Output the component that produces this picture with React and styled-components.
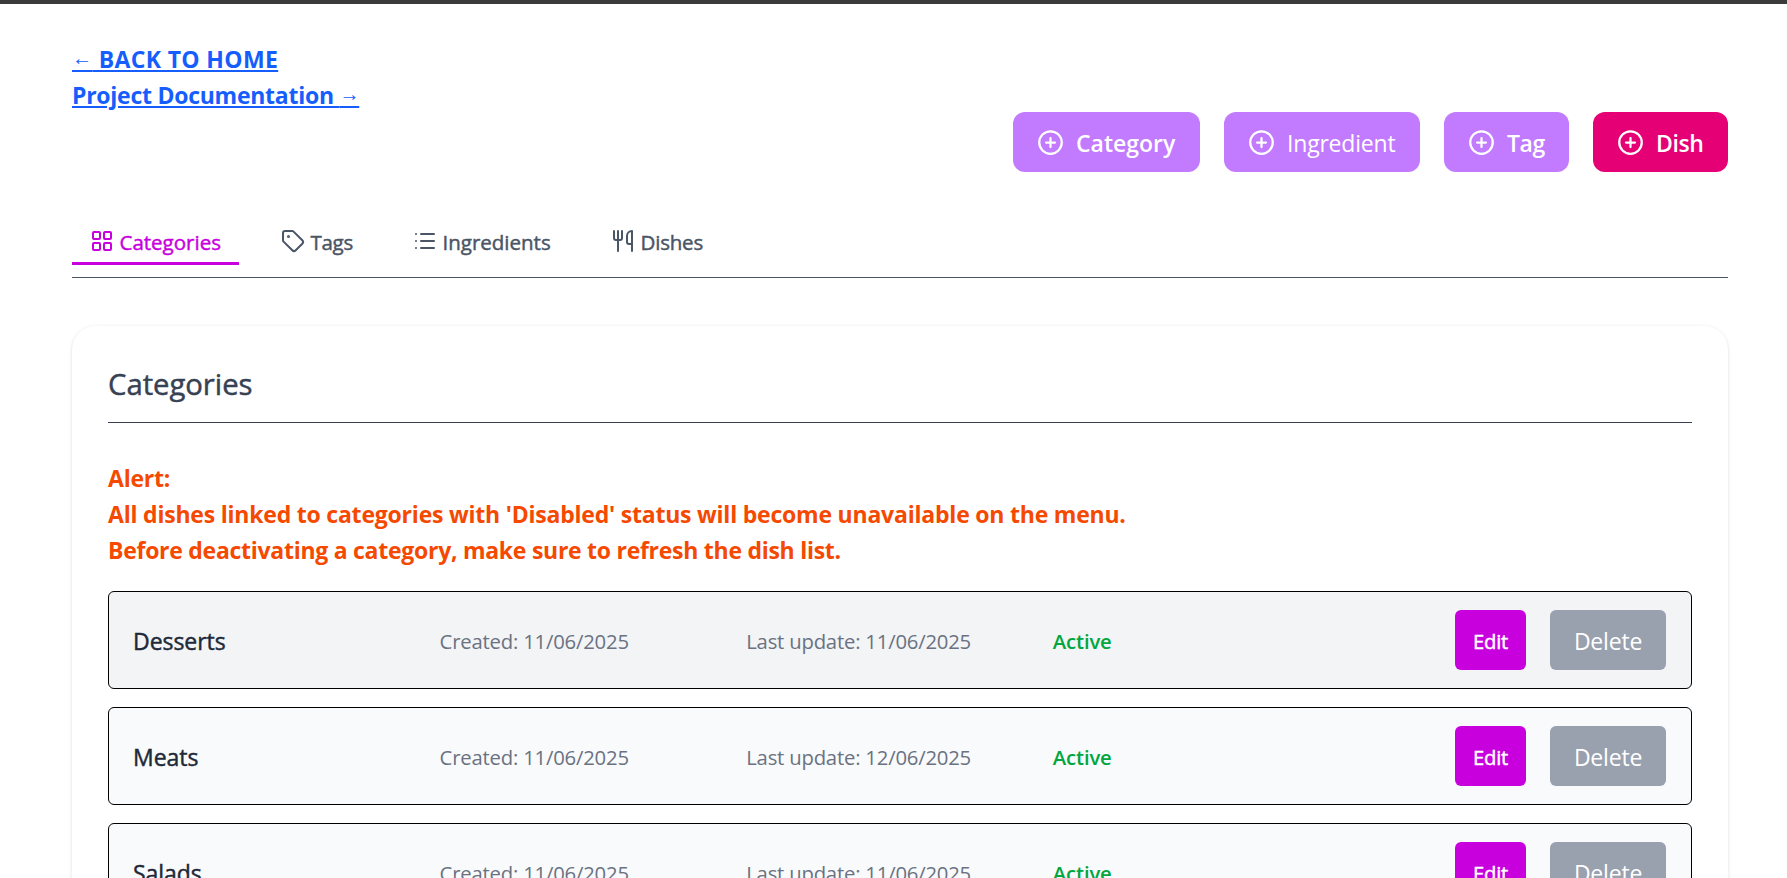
import React from "react";
import styled, { createGlobalStyle, css } from "styled-components";
import { CirclePlus, LayoutGrid, List, Tag, Utensils } from "lucide-react";

const GlobalStyle = createGlobalStyle`
  *, *::before, *::after { box-sizing: border-box; }
  html, body { margin: 0; height: 878px; overflow: hidden; }
  body {
    background: #fff;
    font-family: "Open Sans", "Noto Sans", sans-serif;
    font-size: 23px;
    line-height: 36px;
  }
  button { font-family: inherit; border: 0; margin: 0; cursor: pointer; }
`;

/* Open Sans has no medium cut here, so regular is thickened slightly. */
const medium = css`
  font-weight: 400;
  -webkit-text-stroke: 0.45px currentColor;
`;

const Page = styled.main`
  height: 878px;
  overflow: hidden;
  border-top: 4px solid #3b3b3b;
  padding: 36px 59px 0 72px;
`;

const Links = styled.nav`
  display: flex;
  flex-direction: column;
  align-items: flex-start;
  padding-top: 1px;
  height: 72px;
`;

const TextLink = styled.a`
  color: #155dfc;
  font-weight: 700;
  letter-spacing: ${(p) => p.$spacing}px;
  white-space: nowrap;
  text-decoration: underline;
  text-decoration-thickness: 2px;
  text-underline-offset: 2px;
`;

const Arrow = styled.span`
  font-family: "Liberation Sans", sans-serif;
  font-size: 20px;
  font-weight: 400;
  line-height: 1;
  vertical-align: 3px;
`;

const Actions = styled.div`
  display: flex;
  justify-content: flex-end;
  gap: 24px;
`;

const ActionButton = styled.button`
  display: flex;
  align-items: center;
  gap: 12px;
  width: ${(p) => p.$width}px;
  height: 60px;
  padding: 0 0 0 24px;
  border-radius: 12px;
  background: ${(p) => (p.$primary ? "#e60076" : "#c27aff")};
  color: #fff;
  font-size: 23px;
  font-weight: ${(p) => p.$weight};
  letter-spacing: ${(p) => p.$spacing}px;
  line-height: 36px;
  white-space: nowrap;

  svg { flex: none; }
  span { padding-top: 2px; }
`;

const Tabs = styled.nav`
  display: flex;
  gap: 24px;
  margin-top: 48px;
  height: 58px;
  border-bottom: 1px solid #4a5565;
`;

const Tab = styled.a`
  display: flex;
  align-items: flex-start;
  gap: 5.5px;
  width: ${(p) => p.$width}px;
  height: 45px;
  padding: 9px 0 0 18px;
  border-bottom: 3px solid ${(p) => (p.$active ? "#c800de" : "transparent")};
  color: ${(p) => (p.$active ? "#c800de" : "#4a5565")};
  font-size: 20.5px;
  line-height: 26px;
  letter-spacing: ${(p) => p.$spacing || 0}px;
  white-space: nowrap;

  svg { flex: none; }
  span { ${medium} }
`;

const Card = styled.section`
  margin-top: 48px;
  padding: 36px;
  border-radius: 24px;
  background: #fff;
  box-shadow: 0 1px 4px rgba(0, 0, 0, 0.1), 0 1px 3px -1px rgba(0, 0, 0, 0.1);
`;

const TitleBar = styled.header`
  height: 61px;
  margin-bottom: 37px;
  border-bottom: 1px solid #364153;
`;

const Title = styled.h2`
  margin: 0;
  padding-top: 1px;
  color: #364153;
  font-size: 29.3px;
  line-height: 42px;
  letter-spacing: -0.05px;
  ${medium}
`;

const Alert = styled.div`
  margin: 0 0 23px;
  color: #f54900;
  font-weight: 700;
`;

const AlertLine = styled.p`
  margin: 0;
  letter-spacing: ${(p) => p.$spacing}px;
`;

const Rows = styled.div`
  display: flex;
  flex-direction: column;
  gap: 18px;
`;

const Row = styled.div`
  display: grid;
  grid-template-columns: repeat(5, 1fr);
  align-items: center;
  height: 98px;
  padding: 0 25px 0 24px;
  border: 1px solid #000;
  border-radius: 6px;
  background: ${(p) => (p.$highlighted ? "#f3f4f6" : "#f9fafb")};
`;

const Name = styled.span`
  padding-top: 2px;
  color: #1e2939;
  letter-spacing: -0.05px;
  ${medium}
`;

const Meta = styled.span`
  padding-top: 1px;
  color: #6a7282;
  font-size: 20.3px;
  letter-spacing: -0.2px;
`;

const Status = styled(Meta)`
  color: #00a63e;
  font-weight: 600;
  letter-spacing: -0.14px;
`;

const RowActions = styled.div`
  display: flex;
  justify-content: flex-end;
  gap: 24px;
`;

const RowButton = styled.button`
  width: ${(p) => (p.$danger ? 116 : 71)}px;
  height: 60px;
  padding: 2px 0 0;
  border-radius: 6px;
  background: ${(p) => (p.$danger ? "#99a1af" : "#c800de")};
  color: #fff;
  font-size: ${(p) => (p.$danger ? 23 : 20.3)}px;
  letter-spacing: -0.2px;
  ${(p) => !p.$danger && medium}
`;

const actions = [
  { label: "Category", width: 187, weight: 600, spacing: 0 },
  { label: "Ingredient", width: 196, weight: 400, spacing: -0.2 },
  { label: "Tag", width: 125, weight: 600, spacing: -0.4 },
  { label: "Dish", width: 135, weight: 600, spacing: -0.4, primary: true },
];

const tabs = [
  { label: "Categories", icon: LayoutGrid, width: 167, spacing: 0, active: true },
  { label: "Tags", icon: Tag, width: 108, spacing: -0.3 },
  { label: "Ingredients", icon: List, width: 174, spacing: 0 },
  { label: "Dishes", icon: Utensils, width: 128, spacing: -0.2 },
];

const categories = [
  { name: "Desserts", created: "11/06/2025", updated: "11/06/2025" },
  { name: "Meats", created: "11/06/2025", updated: "12/06/2025" },
  { name: "Salads", created: "11/06/2025", updated: "11/06/2025" },
];

export default function App() {
  return (
    <>
      <GlobalStyle />
      <Page>
        <Links>
          <TextLink $spacing={0.35}>
            <Arrow>←</Arrow> BACK TO HOME
          </TextLink>
          <TextLink $spacing={-0.26}>
            Project Documentation <Arrow>→</Arrow>
          </TextLink>
        </Links>
        <Actions>
          {actions.map((a) => (
            <ActionButton key={a.label} $width={a.width} $weight={a.weight} $spacing={a.spacing} $primary={a.primary}>
              <CirclePlus size={27} strokeWidth={2} />
              <span>{a.label}</span>
            </ActionButton>
          ))}
        </Actions>
        <Tabs>
          {tabs.map(({ label, icon: Icon, width, spacing, active }) => (
            <Tab key={label} $width={width} $spacing={spacing} $active={active}>
              <Icon size={24} strokeWidth={2} />
              <span>{label}</span>
            </Tab>
          ))}
        </Tabs>
        <Card>
          <TitleBar>
            <Title>Categories</Title>
          </TitleBar>
          <Alert>
            <AlertLine $spacing={-0.22}>Alert:</AlertLine>
            <AlertLine $spacing={-0.21}>
              All dishes linked to categories with 'Disabled' status will become unavailable on the menu.
            </AlertLine>
            <AlertLine $spacing={-0.27}>Before deactivating a category, make sure to refresh the dish list.</AlertLine>
          </Alert>
          <Rows>
            {categories.map((c, i) => (
              <Row key={c.name} $highlighted={i === 0}>
                <Name>{c.name}</Name>
                <Meta>Created: {c.created}</Meta>
                <Meta>Last update: {c.updated}</Meta>
                <Status>Active</Status>
                <RowActions>
                  <RowButton>Edit</RowButton>
                  <RowButton $danger>Delete</RowButton>
                </RowActions>
              </Row>
            ))}
          </Rows>
        </Card>
      </Page>
    </>
  );
}
